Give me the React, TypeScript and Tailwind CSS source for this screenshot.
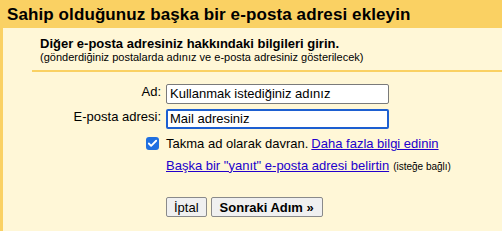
import { Check } from "lucide-react";

const FONT = { fontFamily: '"Liberation Sans", Arial, sans-serif' };

export default function App() {
  return (
    <div className="w-[502px] h-[231px] bg-[#fff7d7] text-black overflow-hidden" style={FONT}>
      {/* Header */}
      <div className="h-[28px] bg-[#fad163] flex items-center pl-[7px]">
        <h1 className="text-[17px] font-bold leading-none tracking-[0.1px]">
          Sahip olduğunuz başka bir e-posta adresi ekleyin
        </h1>
      </div>

      {/* Body */}
      <div className="h-[203px] border-l-[3px] border-[#fad163] pl-[29px] flex flex-col">
        <div className="pl-[8px] pt-[8px]">
          <div className="text-[13px] font-bold leading-[15px]">
            Diğer e-posta adresiniz hakkındaki bilgileri girin.
          </div>
          <div className="text-[11px] leading-[13px]">
            (gönderdiğiniz postalarda adınız ve e-posta adresiniz gösterilecek)
          </div>
        </div>
        <div className="mt-[6px] h-[2px] bg-[#fad163]" />

        <div className="mt-[12px] flex flex-col gap-[5px]">
          <div className="flex items-center gap-[5px]">
            <label className="w-[129px] text-right text-[13px] -mt-[4px]">Ad:</label>
            <div className="w-[223px] h-[20px] bg-white border border-[#7a7a7a] rounded-[2px] flex items-center px-[3px] text-[13px]">
              Kullanmak istediğiniz adınız
            </div>
          </div>
          <div className="flex items-center gap-[5px]">
            <label className="w-[129px] text-right text-[13px] -mt-[4px]">E-posta adresi:</label>
            <div className="w-[223px] h-[20px] bg-white border-2 border-[#1d5fd1] rounded-[2px] flex items-center px-[2px] text-[13px]">
              Mail adresiniz
            </div>
          </div>
        </div>

        <div className="mt-[5px] flex items-center text-[13px]">
          <div className="ml-[114px] w-[13px] h-[13px] rounded-[3px] bg-[#1f6fe0] flex items-center justify-center">
            <Check className="w-[11px] h-[11px] text-white" strokeWidth={4} />
          </div>
          <span className="ml-[7px]">Takma ad olarak davran.</span>
          <a className="ml-[3px] text-[#2200cc] underline">Daha fazla bilgi edinin</a>
        </div>

        <div className="mt-[2px] flex items-baseline pl-[134px]">
          <a className="text-[13px] text-[#2200cc] underline">Başka bir "yanıt" e-posta adresi belirtin</a>
          <span className="ml-[4px] text-[10px]">(isteğe bağlı)</span>
        </div>

        <div className="mt-[22px] flex gap-[4px] pl-[134px]">
          <button className="h-[20px] px-[7px] bg-[#f0f0f0] border border-[#8a8a8a] rounded-[2px] text-[13px] leading-none">
            İptal
          </button>
          <button className="h-[20px] px-[8px] bg-[#f0f0f0] border border-[#8a8a8a] rounded-[2px] text-[13px] font-bold leading-none">
            Sonraki Adım »
          </button>
        </div>
      </div>
    </div>
  );
}
